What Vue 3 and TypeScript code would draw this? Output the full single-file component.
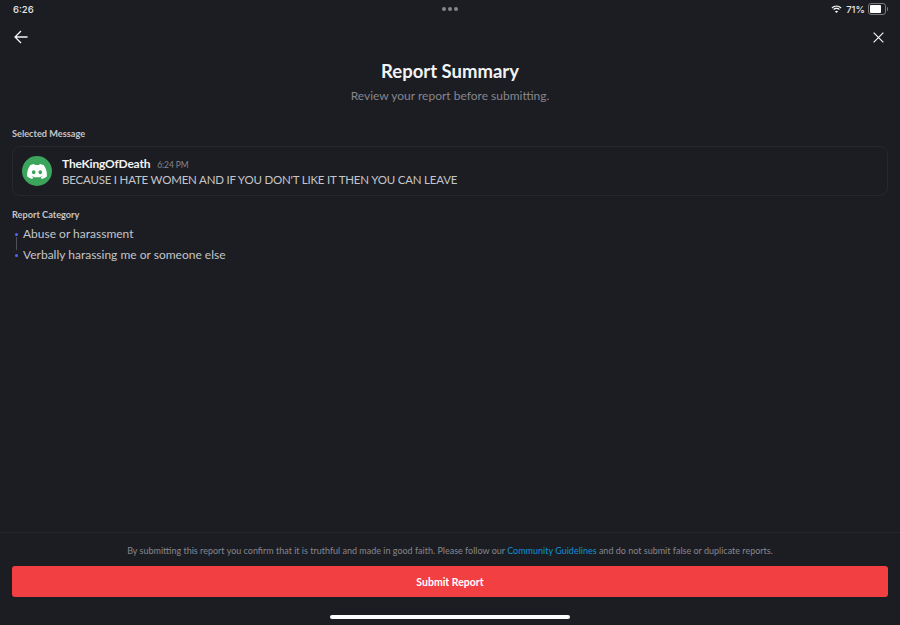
<script setup lang="ts">
const categories: string[] = ['Abuse or harassment', 'Verbally harassing me or someone else']
</script>

<template>
  <div class="page">
    <div class="status">
      <span class="time">6:26</span>
      <div class="dots"><i></i><i></i><i></i></div>
      <div class="sys">
        <svg width="11" height="8.500" viewBox="0 0 13 10"><path d="M6.5 2.1c1.9 0 3.6.7 4.9 1.9l1-1C10.800 1.500 8.800.6 6.500.6S2.200 1.500.6 3l1 1c1.300-1.200 3-1.900 4.900-1.900z" fill="#f2f3f5"/><path d="M6.500 4.700c1.100 0 2.100.4 2.900 1.100l1-1C9.400 3.800 8 3.200 6.500 3.200S3.600 3.800 2.600 4.800l1 1c.8-.7 1.800-1.100 2.900-1.100z" fill="#f2f3f5"/><path d="M6.500 9.500l1.900-2c-.5-.4-1.200-.7-1.900-.7s-1.400.3-1.900.7z" fill="#f2f3f5"/></svg>
        <span class="pct">71%</span>
        <div class="batt"><div class="level"></div></div>
        <div class="nub"></div>
      </div>
    </div>

    <div class="nav">
      <svg width="14" height="14" viewBox="0 0 16 16" fill="none" stroke="#f2f3f5" stroke-width="1.500"><path d="M15.500 8H1.500M8 1.200 1.200 8 8 14.800"/></svg>
      <svg width="11" height="11" viewBox="0 0 12 12" fill="none" stroke="#f2f3f5" stroke-width="1.300"><path d="M.7.7l10.600 10.600M11.300.7.700 11.300"/></svg>
    </div>

    <div class="heading">
      <h1>Report Summary</h1>
      <p>Review your report before submitting.</p>
    </div>

    <main class="content">
      <h2>Selected Message</h2>
      <div class="message">
        <div class="avatar">
          <svg width="20" height="15" viewBox="0 0 127.140 96.360"><path fill="#fff" d="M107.700 8.070A105.150 105.150 0 0 0 81.470 0a72.060 72.060 0 0 0-3.360 6.830 97.680 97.680 0 0 0-29.110 0A72.370 72.370 0 0 0 45.640 0a105.890 105.890 0 0 0-26.250 8.090C2.790 32.650-1.710 56.600.54 80.210a105.730 105.730 0 0 0 32.170 16.150 77.700 77.700 0 0 0 6.890-11.110 68.420 68.420 0 0 1-10.850-5.180c.91-.66 1.800-1.340 2.660-2a75.570 75.570 0 0 0 64.320 0c.87.710 1.760 1.390 2.660 2a68.680 68.680 0 0 1-10.870 5.190 77 77 0 0 0 6.890 11.100 105.250 105.250 0 0 0 32.190-16.140c2.640-27.380-4.510-51.110-18.900-72.150ZM42.450 65.690C36.180 65.690 31 60 31 53s5-12.740 11.430-12.740S54 46 53.890 53s-5.050 12.690-11.440 12.690Zm42.240 0C78.410 65.690 73.250 60 73.250 53s5-12.740 11.440-12.740S96.230 46 96.120 53s-5.040 12.690-11.430 12.690Z"/></svg>
        </div>
        <div class="msg-body">
          <div class="msg-head"><span class="author">TheKingOfDeath</span><span class="stamp">6:24 PM</span></div>
          <div class="msg-text">BECAUSE I HATE WOMEN AND IF YOU DON'T LIKE IT THEN YOU CAN LEAVE</div>
        </div>
      </div>

      <h2 class="second">Report Category</h2>
      <ul class="crumbs">
        <li v-for="(c, i) in categories" :key="c" :class="{ first: i === 0 }">{{ c }}</li>
      </ul>
    </main>

    <footer class="footer">
      <p class="note">By submitting this report you confirm that it is truthful and made in good faith. Please follow our <a>Community Guidelines</a> and do not submit false or duplicate reports.</p>
      <button class="submit">Submit Report</button>
      <div class="home-wrap"><div class="home"></div></div>
    </footer>
  </div>
</template>

<style>
html, body { margin: 0; background: #1c1d22; }
</style>

<style scoped>
.page {
  width: 900px; height: 625px; background: #1c1d22; color: #f2f3f5;
  display: flex; flex-direction: column; overflow: hidden;
  font-family: Lato, sans-serif;
}
.status { height: 18px; display: flex; align-items: center; justify-content: space-between; padding: 0 12px 0 13px; position: relative; }
.time { font-size: 9.500px; font-weight: 500; color: #e4e5e8; font-family: Inter, sans-serif; }
.dots { position: absolute; left: 442px; top: 7px; display: flex; gap: 2px; }
.dots i { width: 4px; height: 4px; border-radius: 50%; background: #85868c; }
.sys { display: flex; align-items: center; }
.pct { font-size: 9.500px; font-weight: 500; color: #e4e5e8; margin: 0 3px 0 4px; font-family: Inter, sans-serif; }
.batt { width: 14px; height: 8px; border: 1px solid #77787d; border-radius: 3px; padding: 1px; box-sizing: content-box; }
.level { width: 75%; height: 100%; background: #fff; border-radius: 1px; }
.nub { width: 1.500px; height: 4px; background: #77787d; margin-left: 0.500px; border-radius: 0 1px 1px 0; }
.nav { display: flex; align-items: center; justify-content: space-between; height: 16px; margin-top: 11px; padding: 0 16px 0 14px; }
.heading { text-align: center; margin-top: 14px; }
h1 { margin: 0; font-size: 18.500px; line-height: 24px; font-weight: 700; color: #f2f3f5; }
.heading p { margin: 5px 0 0; font-size: 12px; line-height: 16px; color: #85868e; }
.content { flex: 1; padding: 0 12px; }
h2 { margin: 24px 0 0; font-size: 9.200px; line-height: 12px; font-weight: 700; color: #c4c5ca; }
.second { margin-top: 13px; }
.message { margin-top: 6px; height: 48px; display: flex; align-items: center; gap: 10px; padding: 0 9px; border: 1px solid #27282e; border-radius: 8px; }
.avatar { width: 30px; height: 30px; border-radius: 50%; background: #3ba55c; display: flex; align-items: center; justify-content: center; }
.msg-body { padding-top: 1px; }
.msg-head { display: flex; align-items: baseline; gap: 7px; }
.author { font-size: 12px; line-height: 16px; font-weight: 700; letter-spacing: -0.200px; color: #f2f3f5; }
.stamp { font-size: 8.500px; letter-spacing: -0.100px; color: #85868e; }
.msg-text { font-size: 11.500px; line-height: 16px; letter-spacing: -0.200px; color: #c4c5ca; }
.crumbs { list-style: none; margin: 5px 0 0; padding: 0 0 0 11px; }
.crumbs li { position: relative; font-size: 12px; line-height: 16px; color: #c4c5ca; margin-bottom: 5px; }
.crumbs li::before { content: ""; position: absolute; left: -8px; top: 7px; width: 3px; height: 3px; border-radius: 50%; background: #5865f2; }
.crumbs li.first::after { content: ""; position: absolute; left: -7px; top: 11px; width: 1px; height: 13px; background: #4e5058; }
.footer { border-top: 1px solid #25262b; padding: 0 12px; }
.note { margin: 12px 0 0; text-align: center; font-size: 9px; line-height: 12px; color: #85868e; }
.note a { color: #0f91d8; }
.submit { display: block; width: 100%; height: 31px; margin-top: 9px; border: 0; border-radius: 3px; background: #f23f42; color: #fff; font: 700 10.500px Lato, sans-serif; }
.home-wrap { display: flex; justify-content: center; padding: 18px 0 6px; }
.home { width: 240px; height: 4px; border-radius: 2px; background: #fff; }
</style>
